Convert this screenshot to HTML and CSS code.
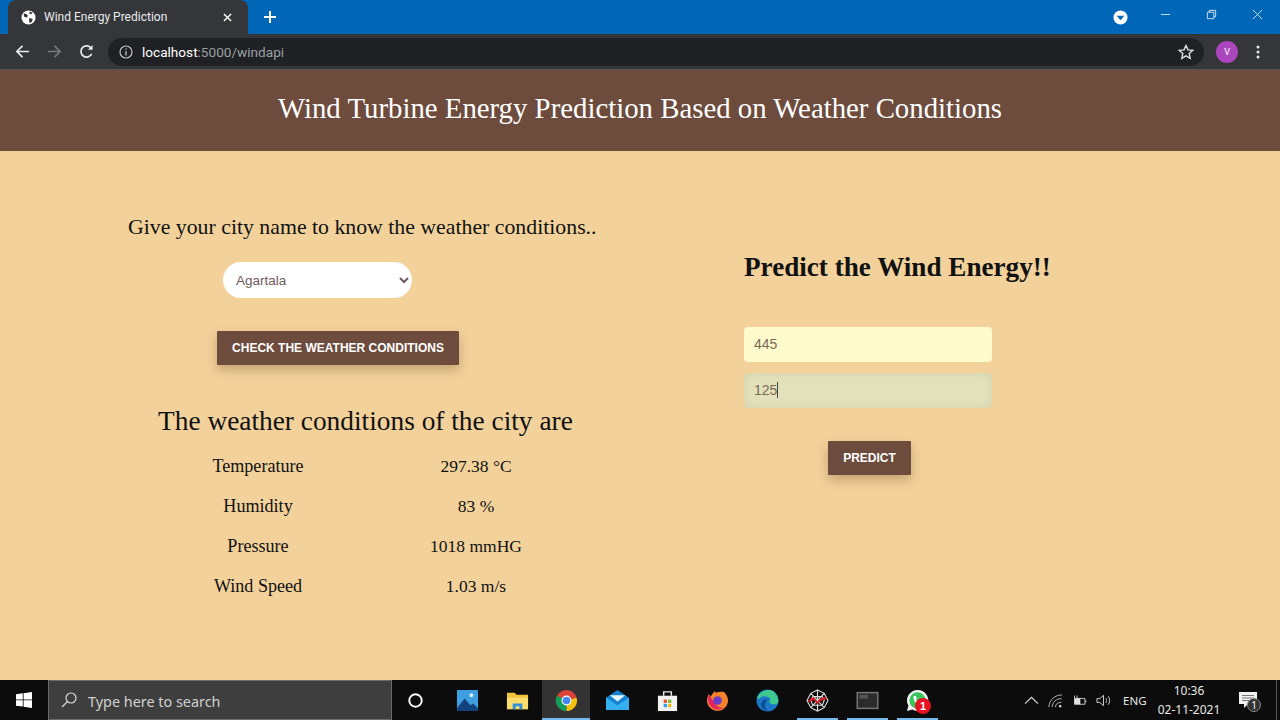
FILE: index.html
```html
<!DOCTYPE html>
<html lang="en">

<head>
  <meta charset="UTF-8">
  <title>Wind Energy Prediction</title>
  <link rel="stylesheet" href="styles.css">
</head>

<body>
  <div class="tabstrip">
    <div class="tab">
      <svg class="favicon" viewBox="0 0 16 16"><circle cx="8" cy="8" r="7.5" fill="#fff"/><path d="M3 3.500l3 1 1.500 2-1.500 1.500-2-.5-1-1zM9 8.500l3.500 1-1 3-2 1.500-1-3zM9 1.500l3.500 1.500-1.500 1.500-2-.5z" fill="#35363a"/></svg>
      <span class="tab-title">Wind Energy Prediction</span>
      <svg class="tab-close" viewBox="0 0 10 10"><path d="M1 1l8 8M9 1l-8 8" stroke="#fff" stroke-width="1.600"/></svg>
    </div>
    <svg class="newtab" viewBox="0 0 12 12"><path d="M6 0v12M0 6h12" stroke="#fff" stroke-width="2"/></svg>
    <svg class="media" viewBox="0 0 16 16"><circle cx="8" cy="8" r="7.500" fill="#fff"/><path d="M4 6h8l-4 5z" fill="#0067b8"/></svg>
    <div class="winbtns">
      <svg viewBox="0 0 12 12"><path d="M1 6h10" stroke="#d7e6f4"/></svg>
      <svg viewBox="0 0 12 12" fill="none"><path d="M1.500 3.500h7v7h-7zM3.500 3.500v-2h7v7h-2" stroke="#d7e6f4"/></svg>
      <svg viewBox="0 0 12 12"><path d="M1 1l10 10M11 1l-10 10" stroke="#d7e6f4"/></svg>
    </div>
  </div>

  <div class="toolbar">
    <svg class="nav" viewBox="0 0 16 16" fill="none"><path d="M15 8H2M8 2L2 8l6 6" stroke="#e8eaed" stroke-width="1.800"/></svg>
    <svg class="nav" viewBox="0 0 16 16" fill="none"><path d="M1 8h13M8 2l6 6-6 6" stroke="#77797c" stroke-width="1.800"/></svg>
    <svg class="nav" viewBox="0 0 16 16" fill="none"><path d="M13.500 10.500A6 6 0 1 1 13 4.500" stroke="#e8eaed" stroke-width="1.800"/><path d="M14.500 1v5h-5z" fill="#e8eaed"/></svg>
    <div class="omnibox">
      <svg class="info" viewBox="0 0 14 14" fill="none"><circle cx="7" cy="7" r="6" stroke="#bdc1c6" stroke-width="1.200"/><path d="M7 6v4.500M7 3.500v1.300" stroke="#bdc1c6" stroke-width="1.300"/></svg>
      <span class="url"><b>localhost</b>:5000/windapi</span>
      <svg class="star" viewBox="0 0 16 16" fill="none"><path d="M8 1.500l2 4.400 4.700.5-3.500 3.200 1 4.700L8 11.900l-4.200 2.400 1-4.700L1.300 6.400 6 5.900z" stroke="#e0e0e0" stroke-width="1.400"/></svg>
    </div>
    <div class="avatar">V</div>
    <svg class="dots" viewBox="0 0 4 14"><circle cx="2" cy="2" r="1.500" fill="#e8eaed"/><circle cx="2" cy="7" r="1.500" fill="#e8eaed"/><circle cx="2" cy="12" r="1.500" fill="#e8eaed"/></svg>
  </div>

  <header class="banner">
    <h1>Wind Turbine Energy Prediction Based on Weather Conditions</h1>
  </header>

  <main class="page">
    <section class="weather">
      <p class="ask">Give your city name to know the weather conditions..</p>
      <select class="city">
        <option>Agartala</option>
      </select>
      <button class="btn btn-check">CHECK THE WEATHER CONDITIONS</button>
      <h2>The weather conditions of the city are</h2>
      <div class="stats">
        <span>Temperature</span><span>297.38 °C</span>
        <span>Humidity</span><span>83 %</span>
        <span>Pressure</span><span>1018 mmHG</span>
        <span>Wind Speed</span><span>1.03 m/s</span>
      </div>
    </section>

    <section class="predict">
      <h3>Predict the Wind Energy!!</h3>
      <div class="field field-a">445</div>
      <div class="field field-b">125<i class="caret"></i></div>
      <button class="btn btn-predict">PREDICT</button>
    </section>
  </main>

  <footer class="taskbar">
    <div class="start">
      <svg viewBox="0 0 16 16"><path d="M0 2.300l6.800-1v6.200H0zM7.600 1.200L16 0v7.500H7.600zM0 8.300h6.800v6.300L0 13.700zM7.600 8.300H16V16l-8.400-1.200z" fill="#fff"/></svg>
    </div>
    <div class="search">
      <svg viewBox="0 0 16 16" fill="none"><circle cx="10" cy="6" r="5" stroke="#d8d8d8" stroke-width="1.200"/><path d="M6.500 9.500L1 15" stroke="#d8d8d8" stroke-width="1.300"/></svg>
      <span>Type here to search</span>
    </div>
    <div class="apps">
      <div class="app app-cortana"><svg viewBox="0 0 24 24" fill="none"><circle cx="12" cy="12" r="6.500" stroke="#fff" stroke-width="2"/></svg></div>
      <div class="app"><svg viewBox="0 0 24 24"><rect x="1" y="1" width="22" height="22" rx="1" fill="#3f9fe0"/><circle cx="16" cy="6.500" r="2" fill="#d8f0fb"/><path d="M1 20l8-10 6 7 3-2 5 5v3H1z" fill="#12437f"/></svg></div>
      <div class="app"><svg viewBox="0 0 24 24"><path d="M1 4h8l2 2h12v15H1z" fill="#f2c33c"/><path d="M1 9h22v12H1z" fill="#fbdd6e"/><path d="M7 21v-6h10v6h-3v-3h-4v3z" fill="#2e8fd8"/></svg></div>
      <div class="app is-active"><svg viewBox="0 0 24 24"><circle cx="12" cy="12" r="11" fill="#db4437"/><path d="M12 12L22.500 9A11 11 0 0 1 12 23z" fill="#f4c20d"/><path d="M12 12L12 23A11 11 0 0 1 2 7z" fill="#0f9d58"/><circle cx="12" cy="12" r="5.200" fill="#fff"/><circle cx="12" cy="12" r="4" fill="#4285f4"/></svg></div>
      <div class="app"><svg viewBox="0 0 24 24"><path d="M0 9L12 1l12 8v13H0z" fill="#1583d0"/><path d="M0 9l12 8 12-8v13H0z" fill="#35b0f0"/><path d="M4 6.500h16L12 13z" fill="#e6f5fc"/></svg></div>
      <div class="app"><svg viewBox="0 0 24 24" fill="none"><path d="M8 7V3h8v4" stroke="#e8e8e8" stroke-width="1.500"/><path d="M2 7h20v16H2z" fill="#f2f2f2"/><path d="M8 11h3.500v3.500H8z" fill="#e8552a"/><path d="M12.500 11H16v3.500h-3.500z" fill="#7cb93a"/><path d="M8 15.500h3.500V19H8z" fill="#2d9fe0"/><path d="M12.500 15.500H16V19h-3.500z" fill="#f6b916"/></svg></div>
      <div class="app"><svg viewBox="0 0 24 24"><path d="M23 12a11 11 0 1 1-20-6.500L5 8c1-3 3-4 4-6 1 1 1 2 1 2 4-2 9-1 9-1s4 4 4 9z" fill="#f5822a"/><path d="M3 6a11 11 0 0 0 17 13c-4 2-8 0-10-3z" fill="#e8265e"/><circle cx="12" cy="12" r="4.500" fill="#6b3bc9"/></svg></div>
      <div class="app"><svg viewBox="0 0 24 24"><circle cx="12" cy="12" r="11.500" fill="#1b78c8"/><path d="M1 10C3 3 12-2 19 3c3 3 5 7 4 11-1 2-5 3-8 1-2-1-1-3 0-4-1-3-6-4-9-3-2 1-4 3-5 2z" fill="#3fc88f"/><path d="M12 11c-4-1-7 2-7 5 0 3 3 6 8 7-4-2-5-8-1-12z" fill="#0f4f95"/></svg></div>
      <div class="app is-open"><svg viewBox="0 0 24 24" fill="none"><path d="M12 1l7 3.500 4 7.500-4 7.500-7 3.500-7-3.500L1 12l4-7.500zM12 1v22M5 4.500l14 15M19 4.500l-14 15M7 8h10l2 4-2 5H7l-2-5z" stroke="#dcdcdc" stroke-width="1.200"/><path d="M2 12l6-4 3.500 5 4-3.500 6-1.500-1 3-5 1.500-3.500 3.500-4-4.500-5 2z" fill="#d81f26"/></svg></div>
      <div class="app is-open"><svg viewBox="0 0 24 24"><rect x=".5" y="3" width="23" height="18" fill="#777"/><rect x="2" y="4.500" width="20" height="15" fill="#2c2c2c"/><rect x="3.500" y="6" width="9" height="4" fill="#555"/></svg></div>
      <div class="app is-open"><svg viewBox="0 0 24 24"><path d="M12 1a11 11 0 0 0-9.500 16.500L1 23l5.700-1.500A11 11 0 1 0 12 1z" fill="#f4f4f4"/><circle cx="12" cy="12" r="8.500" fill="#3ac45c"/><path d="M8 7.500l2-.5 1.500 3-1 1c.5 1.500 1.500 2.500 3 3l1-1 3 1.500-.5 2c-5 1-10-4-9-9z" fill="#fff"/></svg><b class="badge">1</b></div>
    </div>
    <div class="tray">
      <svg class="tray-icon" viewBox="0 0 14 14" fill="none"><path d="M1 10l6-6 6 6" stroke="#e0e0e0"/></svg>
      <svg class="tray-icon" viewBox="0 0 16 16" fill="none"><path d="M1 15C1 8 7 2 15 2M4.500 15c0-5 4-9 10-9M8 15c0-3 2-5 6-5" stroke="#bbb"/><circle cx="13" cy="14" r="1.300" fill="#ddd"/></svg>
      <svg class="tray-icon" viewBox="0 0 18 14" fill="none"><path d="M3 4.500h12.500v7H3z" stroke="#e0e0e0"/><path d="M3 4.500h7v7H3z" fill="#e0e0e0"/><path d="M3 1v3M6 1v3M16.500 6.500v3" stroke="#e0e0e0"/></svg>
      <svg class="tray-icon" viewBox="0 0 16 14" fill="none"><path d="M1 5h3l4-3.500v11L4 9H1zM10.500 4.500c1 1.500 1 3.500 0 5M13 2.500c2 2.500 2 6.500 0 9" stroke="#d8d8d8"/></svg>
      <span class="lang">ENG</span>
      <div class="clock"><span>10:36</span><span>02-11-2021</span></div>
      <div class="notify">
        <svg viewBox="0 0 18 16"><path d="M0 0h18v12H9l-4 4v-4H0z" fill="#f2f2f2"/><path d="M3 3.500h12M3 6h12M3 8.500h8" stroke="#777"/></svg>
        <b class="notify-count">1</b>
      </div>
      <div class="show-desktop"></div>
    </div>
  </footer>
</body>

</html>
```

FILE: styles.css
```css
html,
body {
  margin: 0;
  padding: 0;
}

body {
  width: 1280px;
  height: 720px;
  overflow: hidden;
  display: flex;
  flex-direction: column;
  background: #f2d19b;
  font-family: "Liberation Serif", serif;
}

/* browser chrome */
.tabstrip {
  height: 34px;
  background: #0067b8;
  display: flex;
  align-items: center;
  padding-left: 8px;
  flex: none;
}

.tab {
  width: 240px;
  height: 34px;
  box-sizing: border-box;
  padding: 0 16px 0 13px;
  background: #35363a;
  border-radius: 8px 8px 0 0;
  display: flex;
  align-items: center;
  color: #e8eaed;
  font: 12px "Roboto", sans-serif;
}

.favicon {
  width: 15px;
  height: 15px;
  margin-right: 8px;
}

.tab-title {
  flex: 1;
}

.tab-close {
  width: 9px;
  height: 9px;
}

.newtab {
  width: 12px;
  height: 12px;
  margin-left: 16px;
}

.media {
  width: 15px;
  height: 15px;
  margin-left: 837px;
}

.winbtns {
  display: flex;
  align-self: flex-start;
  gap: 35px;
  margin-left: 32px;
  padding-top: 9px;
}

.winbtns svg {
  width: 11px;
  height: 11px;
}

.toolbar {
  height: 36px;
  background: #35363a;
  border-bottom: 1px solid #57575a;
  box-sizing: border-box;
  display: flex;
  align-items: center;
  padding-left: 15px;
  flex: none;
}

.nav {
  width: 15px;
  height: 15px;
  margin-right: 17px;
}

.omnibox {
  width: 1096px;
  height: 28px;
  margin-left: -3px;
  border-radius: 14px;
  background: #202124;
  display: flex;
  align-items: center;
  padding-left: 11px;
  box-sizing: border-box;
  color: #9aa0a6;
  font: 13.600px "Roboto", sans-serif;
}

.info {
  width: 14px;
  height: 14px;
  margin-right: 9px;
}

.url {
  flex: 1;
}

.url b {
  font-weight: 400;
  color: #fff;
}

.star {
  width: 16px;
  height: 16px;
  margin-right: 10px;
}

.avatar {
  width: 22px;
  height: 22px;
  margin-left: 12px;
  border-radius: 50%;
  background: #ab47bc;
  color: #fff;
  font: 9px/22px "Roboto", sans-serif;
  text-align: center;
}

.dots {
  width: 4px;
  height: 14px;
  margin-left: 18px;
}

/* page */
.banner {
  height: 81px;
  background: #6d4c3d;
  display: flex;
  align-items: center;
  justify-content: center;
  flex: none;
}

h1 {
  margin: 0 0 5px;
  font-size: 28.800px;
  font-weight: 400;
  color: #fff;
}

.page {
  flex: 1;
  display: flex;
  min-height: 0;
}

.weather {
  width: 744px;
  flex: none;
  color: #111;
}

.ask {
  margin: 62px 0 0 128px;
  font-size: 21.800px;
  line-height: 28px;
}

.city {
  display: block;
  width: 189px;
  height: 36px;
  margin: 21px 0 0 223px;
  padding: 0 4px 0 9px;
  border: 0;
  border-radius: 18px;
  background: #fff;
  color: #6f5a5c;
  font: 13.500px "Liberation Sans", sans-serif;
}

.btn {
  display: block;
  height: 34px;
  border: 0;
  border-radius: 1px;
  background: #6d4c3d;
  color: #fff;
  font: 700 12px "Liberation Sans", sans-serif;
  box-shadow: 0 5px 11px rgba(90, 60, 30, .3);
}

.btn-check {
  width: 242px;
  margin: 33px 0 0 217px;
  padding: 0;
}

h2 {
  margin: 39px 0 0 158px;
  font-size: 27.360px;
  line-height: 34px;
  font-weight: 400;
}

.stats {
  display: grid;
  grid-template-columns: 218px 218px;
  grid-auto-rows: 40px;
  margin: 8px 0 0 149px;
  font-size: 18.100px;
  line-height: 40px;
  text-align: center;
}

.stats span:nth-child(even) {
  font-size: 17.500px;
}

.predict {
  flex: 1;
}

h3 {
  margin: 100px 0 0;
  font-size: 27.150px;
  line-height: 32px;
  font-weight: 700;
  color: #111;
}

.field {
  width: 248px;
  height: 35px;
  box-sizing: border-box;
  padding-left: 10px;
  border-radius: 4px;
  color: #7a6a55;
  font: 14px/35px "Liberation Sans", sans-serif;
}

.field-a {
  margin-top: 44px;
  background: #fffbcc;
}

.field-b {
  margin-top: 11px;
  background: #e3e1bb;
  box-shadow: inset 0 0 10px #d3d1aa;
}

.caret {
  display: inline-block;
  width: 1px;
  height: 16px;
  vertical-align: -3px;
  background: #444;
}

.btn-predict {
  width: 83px;
  margin: 33px 0 0 84px;
  padding: 0;
}

/* windows taskbar */
.taskbar {
  height: 40px;
  flex: none;
  background: #0c0c0c;
  display: flex;
  align-items: stretch;
}

.start {
  width: 48px;
  display: flex;
  align-items: center;
  justify-content: center;
}

.start svg {
  width: 16px;
  height: 16px;
}

.search {
  width: 344px;
  box-sizing: border-box;
  padding: 2px 0 0 12px;
  display: flex;
  align-items: center;
  background: #3e3e3e;
  border: 1px solid #6b6b6b;
  color: #d0d0d0;
  font: 14.400px "Noto Sans", sans-serif;
}

.search svg {
  width: 16px;
  height: 16px;
  margin: -2px 11px 0 0;
}

.apps {
  display: flex;
}

.app {
  position: relative;
  width: 50px;
  display: flex;
  align-items: center;
  justify-content: center;
}

.app svg {
  width: 23px;
  height: 23px;
}

.app-cortana {
  padding-right: 3px;
  box-sizing: border-box;
}

.is-open::after,
.is-active::after {
  content: "";
  position: absolute;
  left: 5px;
  right: 4px;
  bottom: 0;
  height: 2px;
  background: #76b9ed;
}

.is-active {
  background: #333;
  width: 48px;
  margin-right: 2px;
}

.is-active::after {
  left: 0;
  right: 0;
}

.badge {
  position: absolute;
  left: 23px;
  top: 18px;
  width: 16px;
  height: 16px;
  border-radius: 50%;
  background: #e81123;
  color: #fff;
  font: 700 11px/16px "Liberation Sans", sans-serif;
  text-align: center;
}

.tray {
  flex: 1;
  display: flex;
  align-items: center;
  padding-left: 82px;
  color: #e8e8e8;
  font: 12px "Noto Sans", sans-serif;
}

.tray-icon {
  width: 15px;
  height: 15px;
  margin-right: 9px;
}

.lang {
  width: 22px;
  margin-left: 3px;
  font-size: 11.500px;
}

.clock {
  display: flex;
  flex-direction: column;
  align-items: center;
  width: 64px;
  margin-left: 12px;
  line-height: 19px;
}

.notify {
  position: relative;
  width: 18px;
  height: 16px;
  margin-left: 18px;
}

.notify svg {
  width: 18px;
  height: 16px;
  display: block;
}

.notify-count {
  position: absolute;
  left: 8px;
  top: 6px;
  width: 14px;
  height: 14px;
  border-radius: 50%;
  background: #333;
  border: 1px solid #888;
  box-sizing: border-box;
  color: #fff;
  font: 10px/12px "Noto Sans", sans-serif;
  text-align: center;
}

.show-desktop {
  align-self: stretch;
  width: 1px;
  margin-left: 19px;
  background: #555;
}
```
